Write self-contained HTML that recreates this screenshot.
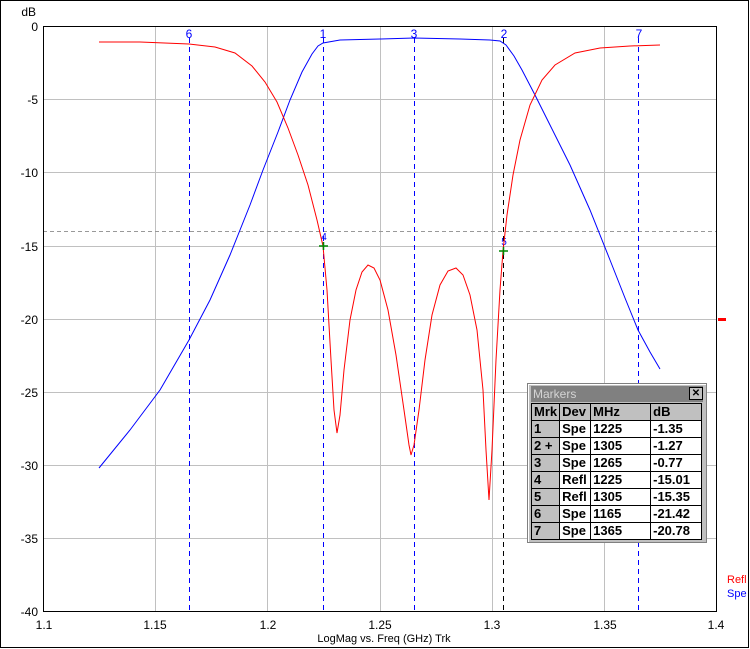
<!DOCTYPE html>
<html><head><style>
body{margin:0;background:#fff;}
#w{position:relative;width:750px;height:649px;overflow:hidden;font-family:"Liberation Sans",sans-serif;}
svg text{font-family:"Liberation Sans",sans-serif;}
.vd{position:absolute;top:38px;width:1px;height:574px;background:repeating-linear-gradient(to bottom,#0000ff 0,#0000ff 5px,transparent 5px,transparent 9px);}
.vd.k{background:repeating-linear-gradient(to bottom,#000 0,#000 5px,transparent 5px,transparent 9px);}
#mk{position:absolute;left:527px;top:383px;width:178px;height:158px;background:#c0c0c0;border:1px solid #808080;box-shadow:inset 1px 1px #fff;}
#mk .t{position:absolute;left:3px;top:2px;width:172px;height:16px;background:#808080;color:#d4d4d4;font-size:12px;line-height:16px;padding-left:2px;box-sizing:border-box;}
#mk .x{position:absolute;right:3px;top:3px;width:12px;height:11px;background:#c0c0c0;border:1px solid #000;font-size:10px;line-height:11px;text-align:center;font-weight:bold;}
table{position:absolute;left:3px;top:19px;border-collapse:collapse;font-size:13px;font-weight:bold;}
td{border:1px solid #000;height:16px;padding:0 2px;line-height:16px;background:#fff;}
tr.h td,td.g{background:#c0c0c0;}
</style></head><body><div id="w">
<svg width="750" height="649" style="position:absolute;left:0;top:0">
<rect x="0.5" y="0.5" width="748" height="647" fill="#fff" stroke="#000"/>
<g stroke="#c0c0c0" stroke-width="1">
<line x1="155.5" y1="26" x2="155.5" y2="612"/><line x1="267.5" y1="26" x2="267.5" y2="612"/><line x1="380.5" y1="26" x2="380.5" y2="612"/><line x1="492.5" y1="26" x2="492.5" y2="612"/><line x1="604.5" y1="26" x2="604.5" y2="612"/>
<line x1="43" y1="99.5" x2="717" y2="99.5"/><line x1="43" y1="172.5" x2="717" y2="172.5"/><line x1="43" y1="246.5" x2="717" y2="246.5"/><line x1="43" y1="319.5" x2="717" y2="319.5"/><line x1="43" y1="392.5" x2="717" y2="392.5"/><line x1="43" y1="465.5" x2="717" y2="465.5"/><line x1="43" y1="538.5" x2="717" y2="538.5"/>
</g>
<line x1="43" y1="231.5" x2="717" y2="231.5" stroke="#999" stroke-dasharray="4,3"/>
<rect x="43.5" y="26.5" width="673" height="585" fill="none" stroke="#000"/>
<g font-size="12" fill="#00f" text-anchor="middle">
<text x="189" y="38">6</text><text x="323" y="38">1</text><text x="414" y="38">3</text><text x="504" y="38">2</text><text x="639" y="38">7</text>
<text x="324" y="240" font-size="10">4</text><text x="504" y="245" font-size="10">5</text>
</g>
</svg>
<div class="vd" style="left:189px"></div>
<div class="vd" style="left:323px"></div>
<div class="vd" style="left:414px"></div>
<div class="vd" style="left:638px"></div>
<div class="vd k" style="left:503px"></div>
<svg width="750" height="649" style="position:absolute;left:0;top:0">
<polyline fill="none" stroke="#00f" points="99,468 130,430 160,390 189,340 210,300 230,255 250,205 263,170 278,132 290,100 302,72 312,54 318,46 323,43 340,40 380,39 414,38 460,39 490,40 500,41 506,45 514,56 522,70 535,95 550,125 570,165 590,210 610,260 625,298 638,330 650,352 660,369"/>
<polyline fill="none" stroke="#f00" points="99,42 140,42 189,44 215,47 235,53 252,66 265,82 277,102 288,128 298,155 308,185 317,220 323,246 327,290 331,360 334,410 337,433 340,415 344,370 350,320 356,290 362,272 368,265 374,268 380,280 388,310 396,355 404,410 409,445 411,455 414,445 419,410 425,360 432,315 440,285 448,271 456,268 463,275 470,295 477,330 483,390 486,450 489,500 492,450 496,360 500,290 503,251 507,215 513,175 520,140 530,105 542,80 555,65 575,53 600,48 630,46 660,45"/>
<g stroke="#080" stroke-width="1.5"><line x1="319" y1="246" x2="328" y2="246"/><line x1="323.5" y1="242" x2="323.5" y2="250"/><line x1="499" y1="251" x2="508" y2="251"/><line x1="503.5" y1="247" x2="503.5" y2="255"/></g>
<rect x="718" y="318" width="8" height="3" fill="#f00"/>
<g font-size="12" fill="#000" text-anchor="end">
<text x="38" y="31">0</text><text x="38" y="104">-5</text><text x="38" y="177">-10</text><text x="38" y="251">-15</text><text x="38" y="324">-20</text><text x="38" y="397">-25</text><text x="38" y="470">-30</text><text x="38" y="543">-35</text><text x="38" y="616">-40</text>
<text x="36" y="16">dB</text>
</g>
<g font-size="12" fill="#000" text-anchor="middle">
<text x="44" y="629">1.1</text><text x="155" y="629">1.15</text><text x="268" y="629">1.2</text><text x="380" y="629">1.25</text><text x="492" y="629">1.3</text><text x="605" y="629">1.35</text><text x="716" y="629">1.4</text>
<text x="384" y="642" font-size="11">LogMag vs. Freq (GHz)  Trk</text>
</g>
<text x="727" y="583" font-size="11" fill="#f00">Refl</text>
<text x="727" y="597" font-size="11" fill="#00f">Spe</text>
</svg>
<div id="mk"><div class="t">Markers</div><div class="x">✕</div>
<table>
<tr class="h"><td style="width:23px">Mrk</td><td style="width:26px">Dev</td><td style="width:55px">MHz</td><td style="width:46px">dB</td></tr>
<tr><td class="g">1</td><td>Spe</td><td>1225</td><td>-1.35</td></tr>
<tr><td class="g">2 +</td><td>Spe</td><td>1305</td><td>-1.27</td></tr>
<tr><td class="g">3</td><td>Spe</td><td>1265</td><td>-0.77</td></tr>
<tr><td class="g">4</td><td>Refl</td><td>1225</td><td>-15.01</td></tr>
<tr><td class="g">5</td><td>Refl</td><td>1305</td><td>-15.35</td></tr>
<tr><td class="g">6</td><td>Spe</td><td>1165</td><td>-21.42</td></tr>
<tr><td class="g">7</td><td>Spe</td><td>1365</td><td>-20.78</td></tr>
</table></div>
</div></body></html>
